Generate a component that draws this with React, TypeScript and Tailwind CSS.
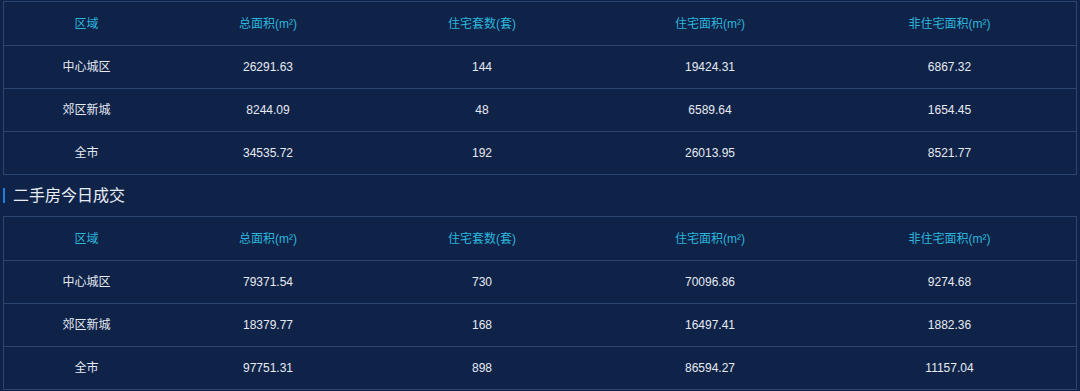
import React from "react";

const cols = ["w-[165px]", "w-[198px]", "w-[230px]", "w-[226px]", "flex-1"];
const headers = ["区域", "总面积(m²)", "住宅套数(套)", "住宅面积(m²)", "非住宅面积(m²)"];

const t1 = [
  ["中心城区", "26291.63", "144", "19424.31", "6867.32"],
  ["郊区新城", "8244.09", "48", "6589.64", "1654.45"],
  ["全市", "34535.72", "192", "26013.95", "8521.77"],
];
const t2 = [
  ["中心城区", "79371.54", "730", "70096.86", "9274.68"],
  ["郊区新城", "18379.77", "168", "16497.41", "1882.36"],
  ["全市", "97751.31", "898", "86594.27", "11157.04"],
];

function Table({ rows }: { rows: string[][] }) {
  return (
    <div className="border border-[#2a4670]">
      <div className="flex h-[43px] items-center text-[12px] text-[#2cb6dc]">
        {headers.map((h, i) => (
          <div key={i} className={`${cols[i]} text-center`}>
            {h}
          </div>
        ))}
      </div>
      {rows.map((r, ri) => (
        <div
          key={ri}
          className="flex h-[43px] items-center border-t border-[#2a4670] text-[12px] text-[#e6ebf3]"
        >
          {r.map((c, i) => (
            <div key={i} className={`${cols[i]} text-center`}>
              {c}
            </div>
          ))}
        </div>
      ))}
    </div>
  );
}

export default function App() {
  return (
    <div
      className="w-[1080px] h-[391px] bg-[#0f2248] pl-[3px] pr-[3px] pt-[1px] overflow-hidden"
      style={{ fontFamily: '"Liberation Sans", "Noto Sans CJK SC", sans-serif' }}
    >
      <Table rows={t1} />
      <div className="flex h-[41px] items-center">
        <div className="w-[2px] h-[15px] bg-[#1e7fe0]" />
        <div className="ml-[8px] text-[16px] text-[#e8edf5]">二手房今日成交</div>
      </div>
      <Table rows={t2} />
    </div>
  );
}
